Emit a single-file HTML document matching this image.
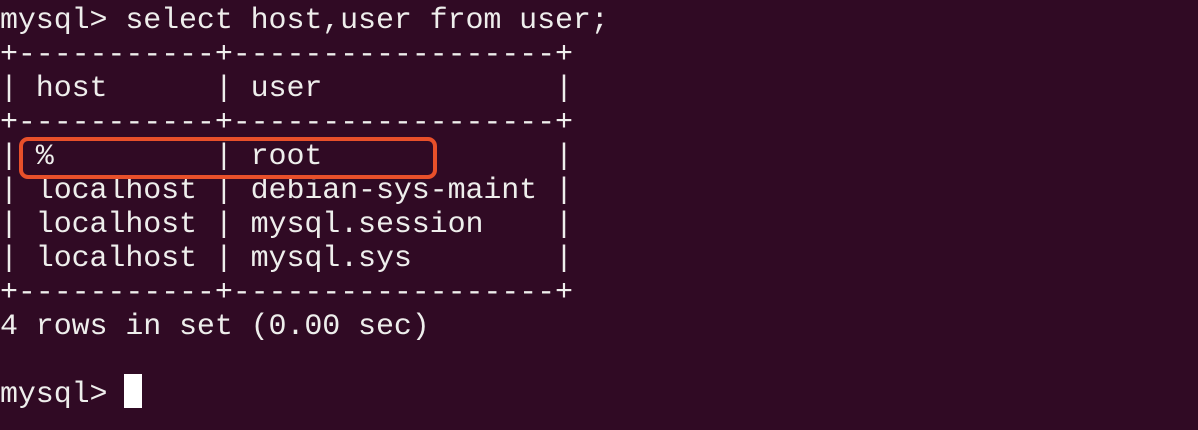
<!DOCTYPE html>
<html><head><style>
html,body{margin:0;padding:0;}
body{width:1198px;height:430px;background:#300a24;overflow:hidden;position:relative;}
pre{margin:0;position:absolute;left:0;top:4px;font-family:"Liberation Mono","DejaVu Sans Mono",monospace;font-size:30px;line-height:34px;color:#eeeeec;letter-spacing:-0.1px;}
.box{position:absolute;left:19px;top:137px;width:410px;height:34px;border:4px solid #e8502a;border-radius:9px;}
.cur{position:absolute;left:124px;top:374px;width:18px;height:34px;background:#fff;}
</style></head><body>
<pre>mysql&gt; select host,user from user;
+-----------+------------------+
| host      | user             |
+-----------+------------------+
| %         | root             |
| localhost | debian-sys-maint |
| localhost | mysql.session    |
| localhost | mysql.sys        |
+-----------+------------------+
4 rows in set (0.00 sec)

mysql&gt; </pre>
<div class="box"></div>
<div class="cur"></div>
</body></html>
